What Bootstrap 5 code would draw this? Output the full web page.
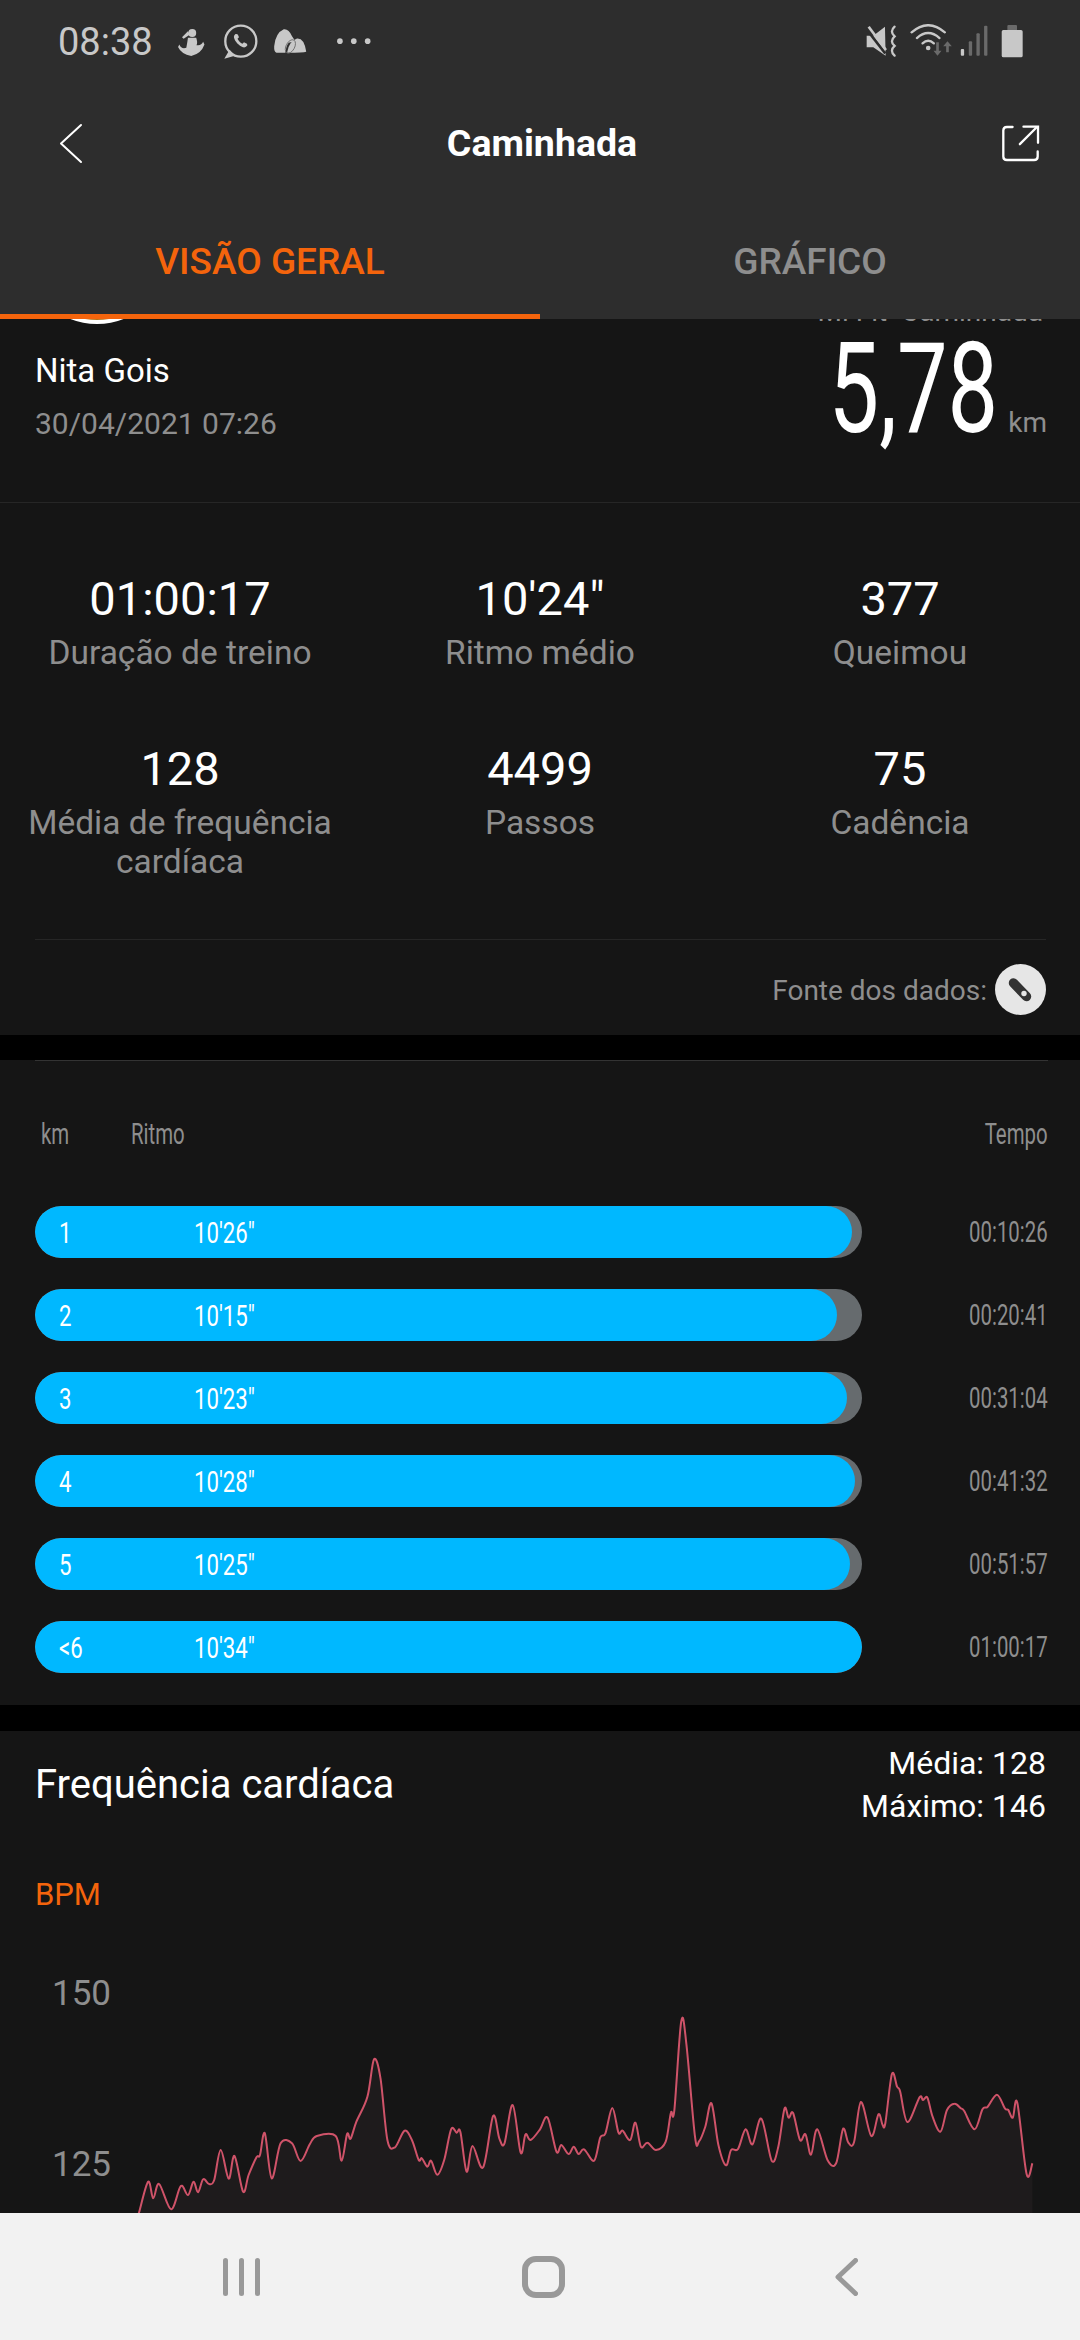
<!DOCTYPE html>
<html lang="pt">
<head>
    <meta charset="UTF-8">
    <meta name="viewport" content="width=device-width, initial-scale=1.0">
    <link href="https://cdn.jsdelivr.net/npm/bootstrap@5.3.3/dist/css/bootstrap.min.css" rel="stylesheet">
    <title>Caminhada</title>
    <style>
        html, body { height: 2340px; overflow: hidden; }
        body { font-family: "Roboto", "Liberation Sans", sans-serif; background: #000; color: #fff; }
        .app-shell { width: 1080px; height: 2340px; }

        /* header */
        .app-head { background: #2d2d2d; height: 319px; flex: none; position: relative; z-index: 2; }
        .status-row { height: 82px; padding: 0 56px 0 58px; }
        .status-time { font-size: 38px; line-height: 46px; color: #c8c8c8; margin-right: 24px; margin-top: 2px; }
        .title-row { height: 122px; padding: 0 40px 0 58px; }
        .title-text { font-size: 37.5px; font-weight: 700; }
        .tab-row { height: 115px; }
        .tab-row .nav-link { font-size: 37px; font-weight: 500; color: #8e8e8e; height: 115px; line-height: 115px; padding: 0; border-radius: 0; }
        .tab-row .nav-link.active { color: #f4640c; border-bottom: 5px solid #f4640c; }

        .app-main { flex: 1 1 auto; min-height: 0; overflow: hidden; }
        .panel { background: #151515; }
        .panel-gap-a { margin-bottom: 25px; }
        .panel-gap-b { margin-bottom: 26px; }

        /* summary */
        .clip-strip { height: 5px; overflow: hidden; padding: 0 37px 0 27px; }
        .clip-avatar { width: 140px; height: 140px; flex: none; border-radius: 50%; border: 4px solid #fff; background: #b9761d; }
        .clip-app { font-size: 28px; line-height: 40px; color: #8e8e8e; margin-bottom: -8px; }
        .summary-row { padding: 12px 33px 58px 35px; border-bottom: 1px solid #262626; }
        .who-name { font-size: 33px; line-height: 40px; }
        .who-date { font-size: 30px; line-height: 40px; color: #8e8e8e; margin-top: 13px; }
        .dist-num { font-size: 126px; line-height: 106px; display: inline-block; transform: scaleX(.715); transform-origin: right center; margin-right: 10px; }
        .dist-unit { font-size: 28px; color: #8e8e8e; }

        /* stats */
        .stats-box { padding-top: 68px; }
        .stat-num { font-size: 47px; line-height: 56px; }
        .stat-lbl { font-size: 33.5px; line-height: 39px; color: #8e8e8e; margin-top: 6px; }
        .stat-gap { margin-top: 69px; }
        .source-row { margin: 58px 34px 0 35px; padding: 24px 0 20px; border-top: 1px solid #262626; }
        .source-text { font-size: 28px; color: #8e8e8e; margin-right: 8px; padding-top: 3px; }

        /* splits */
        .split-box { padding: 0 32px 32px 35px; }
        .split-line { border-top: 1px solid #333; height: 1px; }
        .split-head { font-size: 30px; line-height: 36px; color: #8e8e8e; padding: 55px 0 0 6px; margin-bottom: 54px; }
        .split-list { gap: 31px; }
        .narrow-l, .narrow-r { display: inline-block; transform: scaleX(.68); white-space: nowrap; }
        .narrow-l { transform-origin: left center; }
        .narrow-r { transform-origin: right center; }
        .km-fill .narrow-l { transform: scaleX(.74); }
        .head-km { width: 90px; }
        .km-track { --bs-progress-height: 52px; --bs-progress-bg: #666b6e; --bs-progress-border-radius: 26px; --bs-progress-bar-bg: #00b8ff; width: 827px; flex: none; }
        .km-fill { border-radius: 26px; flex-direction: row; justify-content: flex-start; align-items: center; font-size: 30px; color: #fff; padding-left: 24px; }
        .km-no { width: 135px; flex: none; text-align: left; }
        .km-time { font-size: 30px; line-height: 52px; color: #8e8e8e; }

        /* heart rate */
        .hr-panel { height: 482px; overflow: hidden; }
        .hr-top { padding: 11px 34px 0 35px; }
        .hr-title { font-size: 40px; }
        .hr-stats { font-size: 32px; line-height: 43px; text-align: right; }
        .hr-unit { font-size: 31px; line-height: 36px; color: #f4640c; padding-left: 35px; margin-top: 49px; }
        .hr-chart { position: relative; height: 263px; margin-top: 37px; }
        .hr-chart svg { display: block; }
        .hr-axis { position: absolute; left: 52px; font-size: 35px; line-height: 40px; color: #8e8e8e; }
        .axis-150 { top: 24px; }
        .axis-125 { top: 195px; }

        /* android nav */
        .sys-nav { background: #f2f2f2; height: 127px; flex: none; }
        .sys-home { margin: 0 270px 0 262px; }
    </style>
</head>
<body>
<div class="app-shell d-flex flex-column">

    <header class="app-head">
        <div class="status-row d-flex align-items-center justify-content-between">
            <div class="d-flex align-items-center">
                <span class="status-time">08:38</span>
                <svg width="197" height="37" viewBox="530 65 590 112" fill="#c8c8c8">
                    <g transform="translate(530 80)">
                        <circle cx="43" cy="15" r="12"/>
                        <path d="M30 10 L12 28 L17 33 L36 20Z"/>
                        <path d="M30 30 L55 30 Q60 45 56 52 Q70 55 76 42 L80 50 Q70 78 40 85 Q10 80 0 58 L4 50 Q10 65 25 60 Q28 45 30 30Z"/>
                    </g>
                    <circle cx="720" cy="120" r="47" fill="none" stroke="#c8c8c8" stroke-width="7"/>
                    <path d="M686 146 L670 173 L702 164Z"/>
                    <g transform="translate(668 68) scale(3)">
                        <path d="M12 10 c-1 1 -2 2 -1.500 4 c1 4 5 8 9 9.500 c2 .5 3.500 -.5 4.500 -2 l-.5 -1.500 -3 -1.500 -1.500 1.500 c-2 -.8 -4 -2.800 -5 -5 l1.500 -1.500 -1.200 -3 -1.500 -.5z"/>
                    </g>
                    <g transform="translate(820 80)">
                        <path d="M8 75 Q0 72 1 55 Q5 15 30 4 Q45 2 55 25 L65 40 L45 45 Q37 55 35 75Z"/>
                        <path d="M40 75 Q45 40 70 32 Q92 30 98 72 Q90 75 40 75Z"/>
                        <ellipse cx="50" cy="56" rx="13" ry="22" transform="rotate(28 50 56)" fill="none" stroke="#6a6a6a" stroke-width="2.500"/>
                    </g>
                    <circle cx="1020" cy="120" r="8.500"/>
                    <circle cx="1062" cy="120" r="8.500"/>
                    <circle cx="1104" cy="120" r="8.500"/>
                </svg>
            </div>
            <svg width="158" height="34" viewBox="78 70 475 102">
                <path d="M80 105 L100 105 L135 78 L137 165 L100 140 L80 140Z" fill="#c8c8c8"/>
                <path d="M78 84 L136 158" stroke="#2d2d2d" stroke-width="8"/>
                <path d="M86 78 L138 148" stroke="#c8c8c8" stroke-width="8"/>
                <path d="M164 78 Q148 92 164 107 Q148 122 164 136 Q148 150 164 165" fill="none" stroke="#c8c8c8" stroke-width="7" stroke-linecap="round"/>
                <g fill="none" stroke="#c8c8c8" stroke-width="7" stroke-linecap="round">
                    <path d="M215 95 Q265 52 315 95"/>
                    <path d="M231 112 Q265 82 299 112"/>
                    <path d="M248 128 Q265 112 282 128"/>
                </g>
                <circle cx="265" cy="142" r="7" fill="#c8c8c8"/>
                <g fill="#6a6a6a">
                    <path d="M289 125 h8 v25 h8 l-12 15 -12 -15 h8z"/>
                    <path d="M319 155 h8 v-18 h9 l-13 -15 -13 15 h9z"/>
                    <rect x="387" y="122" width="10" height="43" rx="3"/>
                    <rect x="410" y="98" width="10" height="67" rx="3"/>
                    <rect x="433" y="75" width="10" height="90" rx="3"/>
                    <rect x="503" y="73" width="29" height="17" rx="3"/>
                </g>
                <rect x="363" y="145" width="10" height="20" rx="3" fill="#c8c8c8"/>
                <rect x="486" y="88" width="63" height="82" rx="5" fill="#c8c8c8"/>
            </svg>
        </div>

        <div class="title-row d-flex align-items-center justify-content-between">
            <svg width="25" height="41" viewBox="0 0 25 41" fill="none" stroke="#fff" stroke-width="2" stroke-linecap="round" stroke-linejoin="round">
                <path d="M23 2 L3 20.500 L23 39"/>
            </svg>
            <span class="title-text">Caminhada</span>
            <svg width="39" height="39" viewBox="480 370 118 116" fill="none" stroke="#fff" stroke-width="7" stroke-linecap="round">
                <path d="M515 378 H498 Q487 378 487 389 V467 Q487 478 498 478 H580 Q591 478 591 467 V452"/>
                <path d="M537 430 L588 379"/>
                <path d="M548 377 H592 V426"/>
            </svg>
        </div>

        <ul class="nav nav-justified tab-row">
            <li class="nav-item"><a class="nav-link active" href="#">VISÃO GERAL</a></li>
            <li class="nav-item"><a class="nav-link" href="#">GRÁFICO</a></li>
        </ul>
    </header>

    <main class="app-main">
        <section class="panel panel-gap-a">
            <div class="clip-strip d-flex align-items-end justify-content-between">
                <div class="clip-avatar"></div>
                <div class="clip-app">Mi Fit &nbsp;Caminhada</div>
            </div>
            <div class="summary-row d-flex align-items-end justify-content-between">
                <div>
                    <div class="who-name">Nita Gois</div>
                    <div class="who-date">30/04/2021 07:26</div>
                </div>
                <div class="d-flex align-items-baseline">
                    <span class="dist-num">5,78</span>
                    <span class="dist-unit">km</span>
                </div>
            </div>

            <div class="stats-box">
                <div class="row g-0 text-center">
                    <div class="col-4"><div class="stat-num">01:00:17</div><div class="stat-lbl">Duração de treino</div></div>
                    <div class="col-4"><div class="stat-num">10'24"</div><div class="stat-lbl">Ritmo médio</div></div>
                    <div class="col-4"><div class="stat-num">377</div><div class="stat-lbl">Queimou</div></div>
                </div>
                <div class="row g-0 text-center stat-gap">
                    <div class="col-4"><div class="stat-num">128</div><div class="stat-lbl">Média de frequência cardíaca</div></div>
                    <div class="col-4"><div class="stat-num">4499</div><div class="stat-lbl">Passos</div></div>
                    <div class="col-4"><div class="stat-num">75</div><div class="stat-lbl">Cadência</div></div>
                </div>
            </div>

            <div class="source-row d-flex align-items-center justify-content-end">
                <span class="source-text">Fonte dos dados:</span>
                <svg width="51" height="51" viewBox="0 0 51 51">
                    <circle cx="25.500" cy="25.500" r="25.500" fill="#e6e6e6"/>
                    <path d="M18.500 19 L31.500 32.500" stroke="#333" stroke-width="9.500" stroke-linecap="round"/>
                    <circle cx="29" cy="29.500" r="2.700" fill="#e6e6e6"/>
                </svg>
            </div>
        </section>

        <section class="panel panel-gap-b split-box">
            <div class="split-line"></div>
            <div class="split-head d-flex justify-content-between">
                <div class="d-flex">
                    <div class="head-km"><span class="narrow-l">km</span></div>
                    <span class="narrow-l">Ritmo</span>
                </div>
                <span class="narrow-r">Tempo</span>
            </div>
            <div class="split-list d-flex flex-column">
                <div class="d-flex justify-content-between">
                    <div class="progress km-track"><div class="progress-bar km-fill" style="width: 98.8%"><span class="km-no"><span class="narrow-l">1</span></span><span class="narrow-l">10'26"</span></div></div>
                    <span class="km-time"><span class="narrow-r">00:10:26</span></span>
                </div>
                <div class="d-flex justify-content-between">
                    <div class="progress km-track"><div class="progress-bar km-fill" style="width: 97%"><span class="km-no"><span class="narrow-l">2</span></span><span class="narrow-l">10'15"</span></div></div>
                    <span class="km-time"><span class="narrow-r">00:20:41</span></span>
                </div>
                <div class="d-flex justify-content-between">
                    <div class="progress km-track"><div class="progress-bar km-fill" style="width: 98.2%"><span class="km-no"><span class="narrow-l">3</span></span><span class="narrow-l">10'23"</span></div></div>
                    <span class="km-time"><span class="narrow-r">00:31:04</span></span>
                </div>
                <div class="d-flex justify-content-between">
                    <div class="progress km-track"><div class="progress-bar km-fill" style="width: 99.2%"><span class="km-no"><span class="narrow-l">4</span></span><span class="narrow-l">10'28"</span></div></div>
                    <span class="km-time"><span class="narrow-r">00:41:32</span></span>
                </div>
                <div class="d-flex justify-content-between">
                    <div class="progress km-track"><div class="progress-bar km-fill" style="width: 98.6%"><span class="km-no"><span class="narrow-l">5</span></span><span class="narrow-l">10'25"</span></div></div>
                    <span class="km-time"><span class="narrow-r">00:51:57</span></span>
                </div>
                <div class="d-flex justify-content-between">
                    <div class="progress km-track"><div class="progress-bar km-fill" style="width: 100%"><span class="km-no"><span class="narrow-l">&lt;6</span></span><span class="narrow-l">10'34"</span></div></div>
                    <span class="km-time"><span class="narrow-r">01:00:17</span></span>
                </div>
            </div>
        </section>

        <section class="panel hr-panel">
            <div class="hr-top d-flex align-items-center justify-content-between">
                <span class="hr-title">Frequência cardíaca</span>
                <div class="hr-stats">
                    <div>Média: 128</div>
                    <div>Máximo: 146</div>
                </div>
            </div>
            <div class="hr-unit">BPM</div>
            <div class="hr-chart">
                <svg width="1080" height="263" viewBox="0 1950 1080 263">
                    <path id="hrArea" fill="#2a2426" fill-opacity=".45"></path>
                    <path id="hrLine" fill="none" stroke="#cf5369" stroke-width="2" stroke-linejoin="round"></path>
                </svg>
                <span class="hr-axis axis-150">150</span>
                <span class="hr-axis axis-125">125</span>
            </div>
        </section>
    </main>

    <nav class="sys-nav d-flex align-items-center justify-content-center">
        <svg width="37" height="38" viewBox="0 0 37 38" fill="#999">
            <rect x="0" y="0" width="5" height="38" rx="2.500"/>
            <rect x="16" y="0" width="5" height="38" rx="2.500"/>
            <rect x="32" y="0" width="5" height="38" rx="2.500"/>
        </svg>
        <svg class="sys-home" width="43" height="42" viewBox="0 0 43 42">
            <rect x="3" y="3" width="37" height="36" rx="11" fill="none" stroke="#999" stroke-width="6"/>
        </svg>
        <svg width="23" height="38" viewBox="0 0 23 38">
            <path d="M20.500 2.500 L3 19 L20.500 35.500" fill="none" stroke="#999" stroke-width="5" stroke-linecap="round" stroke-linejoin="round"/>
        </svg>
    </nav>
</div>

<script>
    // heart rate samples traced from the chart, [x, y] in the crop's scale
    const leftPart = [[395,815],[403,790],[430,695],[445,745],[462,702],[497,778],[525,708],[546,735],[562,695],[575,727],[590,688],[607,702],[622,690],[641,600],[664,686],[681,618],[706,725],[722,675],[745,622],[755,615],[769,550],[789,685],[815,580],[848,580],[873,633],[900,582],[920,558],[975,558],[992,632],[1008,552],[1018,566],[1035,515],[1067,440],[1086,328],[1105,385],[1125,570],[1147,592],[1175,542],[1197,572],[1216,630],[1225,625],[1241,650],[1252,632],[1270,674],[1290,630],[1310,538],[1326,548],[1337,546],[1355,665],[1372,588],[1403,652],[1432,498],[1450,565],[1465,580],[1489,465],[1512,608],[1526,553],[1541,570]];
    const rightPart = [[0,538],[22,503],[48,605],[62,585],[83,612],[98,590],[112,612],[128,598],[157,632],[175,562],[190,550],[210,474],[228,548],[240,542],[262,570],[277,518],[293,590],[312,578],[337,600],[365,575],[380,488],[390,482],[410,215],[425,280],[450,560],[462,574],[480,530],[498,460],[518,585],[540,646],[555,600],[575,597],[597,538],[617,583],[643,506],[673,632],[692,590],[710,476],[722,503],[735,489],[755,570],[771,553],[787,614],[805,538],[835,630],[860,640],[880,537],[895,577],[912,577],[932,456],[962,558],[983,493],[995,525],[1003,518],[1022,372],[1037,410],[1046,425],[1067,516],[1102,442],[1112,450],[1125,443],[1140,500],[1163,545],[1182,480],[1204,461],[1222,475],[1232,483],[1262,538],[1285,478],[1300,470],[1327,434],[1350,475],[1360,480],[1373,503],[1386,458],[1413,672],[1430,640]];

    const pts = leftPart.map(p => [p[0] / 2.904, 1950 + p[1] / 3])
        .concat(rightPart.map(p => [540 + p[0] / 2.904, 1950 + p[1] / 3]));

    let d = `M${pts[0][0].toFixed(1)} ${pts[0][1].toFixed(1)}`;
    for (let i = 0; i < pts.length - 1; i++) {
        const a = pts[i - 1] || pts[i], b = pts[i], c = pts[i + 1], e = pts[i + 2] || c;
        const c1x = b[0] + (c[0] - a[0]) / 6, c1y = b[1] + (c[1] - a[1]) / 6;
        const c2x = c[0] - (e[0] - b[0]) / 6, c2y = c[1] - (e[1] - b[1]) / 6;
        d += ` C${c1x.toFixed(1)} ${c1y.toFixed(1)} ${c2x.toFixed(1)} ${c2y.toFixed(1)} ${c[0].toFixed(1)} ${c[1].toFixed(1)}`;
    }
    document.getElementById('hrLine').setAttribute('d', d);
    const last = pts[pts.length - 1];
    document.getElementById('hrArea').setAttribute('d', `${d} L${last[0].toFixed(1)} 2213 L${pts[0][0].toFixed(1)} 2213Z`);
</script>
<script src="https://cdn.jsdelivr.net/npm/bootstrap@5.3.3/dist/js/bootstrap.bundle.min.js"></script>
</body>
</html>
